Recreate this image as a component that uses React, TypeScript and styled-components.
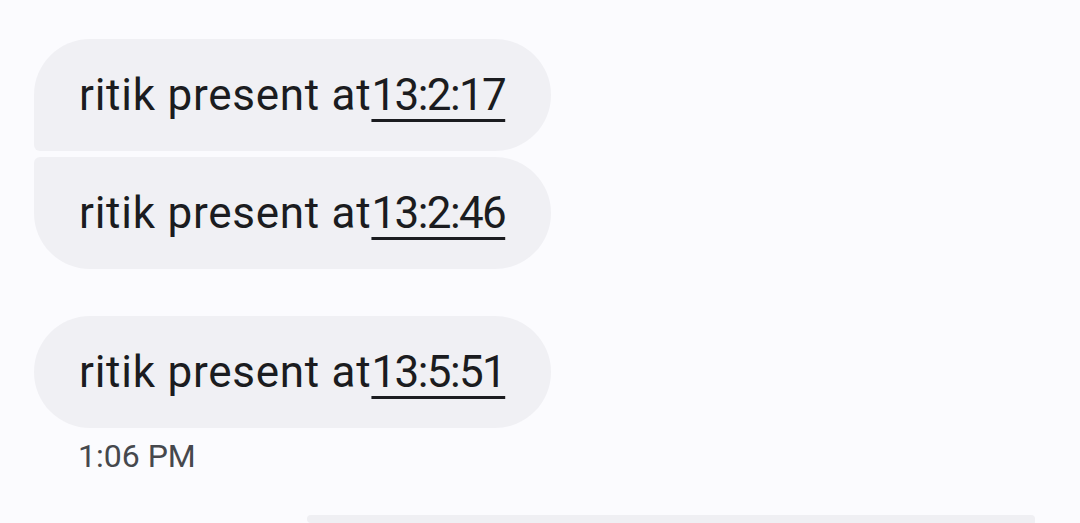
import React from "react";
import styled, { createGlobalStyle } from "styled-components";

const Global = createGlobalStyle`
  html, body { margin: 0; padding: 0; background: #fbfbfe; }
  body { font-family: Roboto, "Noto Sans", sans-serif; overflow: hidden; }
`;

const Page = styled.div`
  width: 1080px;
  height: 523px;
  background: #fbfbfe;
  box-sizing: border-box;
  padding: 39px 0 0 34px;
  display: flex;
  flex-direction: column;
  align-items: flex-start;
  overflow: hidden;
`;

const Group = styled.div<{ $gap?: number }>`
  display: flex;
  flex-direction: column;
  align-items: flex-start;
  gap: 6px;
  margin-top: ${(p) => p.$gap ?? 0}px;
`;

const Bubble = styled.div<{ $shape: "top" | "bottom" | "single" }>`
  background: #f0f0f4;
  color: #1b1c20;
  font-size: 44px;
  line-height: 48px;
  padding: 32px 46px 32px 45px;
  letter-spacing: 0.75px;
  white-space: nowrap;
  border-radius: ${(p) =>
    p.$shape === "top"
      ? "56px 56px 56px 6px"
      : p.$shape === "bottom"
      ? "6px 56px 56px 56px"
      : "56px"};
`;

const Time = styled.span`
  letter-spacing: -1.6px;
  text-decoration: underline;
  text-decoration-thickness: 3px;
  text-underline-offset: 9px;
`;

const Stamp = styled.div`
  margin: 9px 0 0 44px;
  font-size: 32px;
  line-height: 38px;
  color: #46484d;
`;

const SentRow = styled.div`
  margin-top: 40px;
  margin-left: 273px;
  width: 728px;
  height: 80px;
  background: #efeff3;
  border-radius: 56px 56px 6px 56px;
`;

export default function App() {
  return (
    <>
      <Global />
      <Page>
        <Group>
          <Bubble $shape="top">
            ritik present at<Time>13:2:17</Time>
          </Bubble>
          <Bubble $shape="bottom">
            ritik present at<Time>13:2:46</Time>
          </Bubble>
        </Group>
        <Group $gap={47}>
          <Bubble $shape="single">
            ritik present at<Time>13:5:51</Time>
          </Bubble>
        </Group>
        <Stamp>1:06 PM</Stamp>
        <SentRow />
      </Page>
    </>
  );
}
